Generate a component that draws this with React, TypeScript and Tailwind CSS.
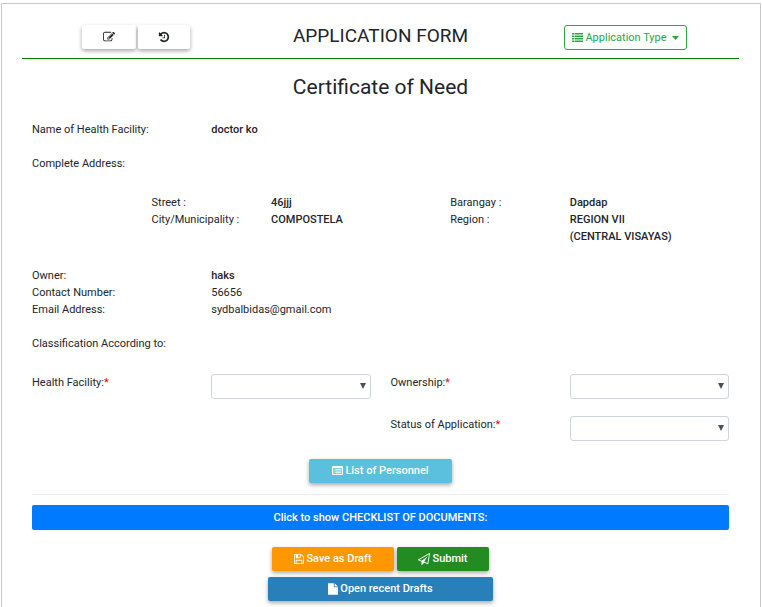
import type { ReactNode } from "react";

const raised =
  "inline-flex h-6 items-center justify-center gap-[2px] rounded-[2px] pb-px text-[11px] font-medium shadow-[0_2px_4px_rgba(0,0,0,0.35)]";

const icons = {
  edit: "M888 1184l116-116-152-152-116 116v56h96v96h56zm440-720q-16-16-33 1l-350 350q-17 17-1 33t33-1l350-350q17-17 1-33zm80 594v190q0 119-84.5 203.5t-203.5 84.5h-832q-119 0-203.5-84.5t-84.5-203.5v-832q0-119 84.5-203.5t203.5-84.5h832q63 0 117 25 15 7 18 23 3 17-9 29l-49 49q-14 14-32 8-23-6-45-6h-832q-66 0-113 47t-47 113v832q0 66 47 113t113 47h832q66 0 113-47t47-113v-126q0-13 9-22l64-64q15-15 35-7t20 29zm-96-738l288 288-672 672h-288v-288zm444 132l-92 92-288-288 92-92q28-28 68-28t68 28l152 152q28 28 28 68t-28 68z",
  history:
    "M1664 896q0 156-61 298t-164 245-245 164-298 61q-172 0-327-72.5t-264-204.5q-7-10-6.5-22.5t8.5-20.5l137-138q10-9 25-9 16 2 23 12 73 95 179 147t225 52q104 0 198.5-40.5t163.5-109.5 109.5-163.5 40.5-198.5-40.5-198.5-109.5-163.5-163.5-109.5-198.5-40.5q-98 0-188 35.5t-160 101.5l137 138q31 30 14 69-17 40-59 40h-448q-26 0-45-19t-19-45v-448q0-42 40-59 39-17 69 14l130 129q107-101 244.5-156.5t284.5-55.5q156 0 298 61t245 164 164 245 61 298zm-640-288v448q0 14-9 23t-23 9h-320q-14 0-23-9t-9-23v-64q0-14 9-23t23-9h224v-352q0-14 9-23t23-9h64q14 0 23 9t9 23z",
  save: "M512 1536h768v-384h-768v384zm896 0h128v-896q0-14-10-38.5t-20-34.5l-281-281q-10-10-34-20t-39-10v416q0 40-28 68t-68 28h-576q-40 0-68-28t-28-68v-416h-128v1280h128v-416q0-40 28-68t68-28h832q40 0 68 28t28 68v416zm-384-928v-320q0-13-9.5-22.5t-22.5-9.5h-192q-13 0-22.5 9.5t-9.5 22.5v320q0 13 9.5 22.5t22.5 9.5h192q13 0 22.5-9.5t9.5-22.5zm640 32v928q0 40-28 68t-68 28h-1344q-40 0-68-28t-28-68v-1344q0-40 28-68t68-28h928q40 0 88 20t76 48l280 280q28 28 48 76t20 88z",
  send: "M1764 11q33 24 27 64l-256 1536q-5 29-32 45-14 8-31 8-11 0-24-5l-527-215-298 327q-18 21-47 21-14 0-23-4-19-7-30-23.5t-11-36.5v-452l-472-193q-37-14-40-55-3-39 32-59l1664-960q35-21 68 2zm-342 1499l221-1323-1434 827 336 137 863-639-478 797z",
  file: "M1152 512v-472q22 14 36 28l408 408q14 14 28 36h-472zm-128 32q0 40 28 68t68 28h544v1056q0 40-28 68t-68 28h-1344q-40 0-68-28t-28-68v-1600q0-40 28-68t68-28h800v544z",
};

function Icon({ name, box, className }: { name: keyof typeof icons; box: string; className: string }) {
  return (
    <svg viewBox={box} className={className} fill="currentColor" aria-hidden="true">
      <path d={icons[name]} />
    </svg>
  );
}

/* Four rows, each a bullet and a bar. */
function ListIcon() {
  return (
    <svg viewBox="0 0 11 9" className="h-[9px] w-[11px]" fill="currentColor" aria-hidden="true">
      <path d="M0 0h2v1.5H0zM2.5 0H11v1.5H2.5zM0 2.5h2V4H0zM2.5 2.5H11V4H2.5zM0 5h2v1.5H0zM2.5 5H11v1.5H2.5zM0 7.5h2V9H0zM2.5 7.5H11V9H2.5z" />
    </svg>
  );
}

/* Framed table with a heavy top bar and three rows. */
function ListAltIcon() {
  return (
    <svg viewBox="0 0 22 18" className="h-[9px] w-[11px]" aria-hidden="true">
      <path
        fill="currentColor"
        fillRule="evenodd"
        d="M2 0h18a2 2 0 0 1 2 2v14a2 2 0 0 1-2 2H2a2 2 0 0 1-2-2V2a2 2 0 0 1 2-2zM2 4v12h18V4z"
      />
      <path fill="currentColor" d="M3 5.5h2v2H3zM6.500 5.500H19v2H6.500zM3 9h2v2H3zM6.500 9H19v2H6.500zM3 12.500h2v2H3zM6.500 12.500H19v2H6.500z" />
    </svg>
  );
}

function Cell({ span, children }: { span: string; children?: ReactNode }) {
  return <div className={`px-[10px] ${span}`}>{children}</div>;
}

function Field({ id, label, className }: { id: string; label: string; className: string }) {
  return (
    <>
      <label htmlFor={id} className={`col-span-3 px-[10px] ${className}`}>
        {label}:<span className="text-[#ff0000]">*</span>
      </label>
      <div className="col-span-3 px-[10px]">
        <div className="relative">
          <select
            id={id}
            className="block h-[25px] w-full appearance-none rounded-[3px] border border-[#ced4da] bg-white px-2"
          >
            <option value=""></option>
          </select>
          <svg
            viewBox="0 0 6 6"
            className="pointer-events-none absolute top-[9px] right-[5px] size-[6px] text-[#495057]"
            aria-hidden="true"
          >
            <path fill="currentColor" d="M0 0h6L3 6z" />
          </svg>
        </div>
      </div>
    </>
  );
}

export default function App() {
  return (
    <div className="flex min-h-screen flex-col bg-white px-px pt-[3px] font-['Roboto','Liberation_Sans',sans-serif] text-[11px] leading-[17px] text-[#212529]">
      <main className="flex-1 border border-b-0 border-[#c8c8c8] pt-5 pr-[21px] pl-5">
        <header className="grid grid-cols-3 gap-x-[18px] border-b border-[#008000] pb-2">
          <div className="flex justify-center gap-[2px] pt-px">
            <button type="button" aria-label="Edit" className={`${raised} w-[54px] bg-white`}>
              <Icon name="edit" box="0 0 1792 1792" className="size-3" />
            </button>
            <button type="button" aria-label="History" className={`${raised} w-[52px] bg-white`}>
              <Icon name="history" box="0 0 1792 1792" className="size-3" />
            </button>
          </div>
          <h1 className="text-center text-[19px] leading-[23px]">APPLICATION FORM</h1>
          <div className="flex justify-center pt-px">
            <button
              type="button"
              className="inline-flex h-[25px] items-center gap-[2px] rounded-[3px] border border-[#28a745] px-[7px] text-[#28a745]"
            >
              <ListIcon />
              Application Type
              <svg viewBox="0 0 7 4" className="ml-[3px] h-1 w-[7px]" fill="currentColor" aria-hidden="true">
                <path d="M0 0h7L3.5 4z" />
              </svg>
            </button>
          </div>
        </header>

        <h2 className="pt-4 text-center text-[21px] leading-6">Certificate of Need</h2>

        <section className="grid grid-cols-12 pt-[22px]">
          <Cell span="col-span-3">Name of Health Facility:</Cell>
          <Cell span="col-span-9">
            <strong className="font-medium">doctor ko</strong>
          </Cell>
        </section>

        <section className="grid grid-cols-12 pt-[17px]">
          <Cell span="col-span-12">Complete Address:</Cell>
        </section>

        <section className="grid grid-cols-12 pt-[22px]">
          <Cell span="col-span-2 col-start-3">Street :</Cell>
          <Cell span="col-span-3">
            <strong className="font-medium">46jjj</strong>
          </Cell>
          <Cell span="col-span-2">Barangay :</Cell>
          <Cell span="col-span-3">
            <strong className="font-medium">Dapdap</strong>
          </Cell>
          <Cell span="col-span-2 col-start-3">City/Municipality :</Cell>
          <Cell span="col-span-3">
            <strong className="font-medium">COMPOSTELA</strong>
          </Cell>
          <Cell span="col-span-2">Region :</Cell>
          <Cell span="col-span-3">
            <strong className="font-medium">
              REGION VII
              <br />
              (CENTRAL VISAYAS)
            </strong>
          </Cell>
        </section>

        <section className="grid grid-cols-12 pt-[22px]">
          <Cell span="col-span-3">Owner:</Cell>
          <Cell span="col-span-9">
            <strong className="font-medium">haks</strong>
          </Cell>
          <Cell span="col-span-3">Contact Number:</Cell>
          <Cell span="col-span-9">56656</Cell>
          <Cell span="col-span-3">Email Address:</Cell>
          <Cell span="col-span-9">sydbalbidas@gmail.com</Cell>
        </section>

        <section className="grid grid-cols-12 pt-[17px]">
          <Cell span="col-span-12">Classification According to:</Cell>
        </section>

        <form className="grid grid-cols-12 gap-y-[17px] pt-[22px]">
          <Field id="facility" label="Health Facility" className="" />
          <Field id="ownership" label="Ownership" className="" />
          <Field id="status" label="Status of Application" className="col-start-7" />
        </form>

        <div className="px-[10px]">
          <div className="flex justify-center pt-[18px]">
            <button type="button" className={`${raised} w-[143px] bg-[#5bc0de] text-white`}>
              <ListAltIcon />
              List of Personnel
            </button>
          </div>

          <hr className="mt-[11px] border-[#eeeeee]" />

          <button
            type="button"
            className="mt-[10px] block h-[25px] w-full rounded-[2px] bg-[#007bff] font-medium text-white"
          >
            Click to show CHECKLIST OF DOCUMENTS:
          </button>

          <div className="flex flex-col items-center gap-[6px] pt-[17px]">
            <div className="flex gap-[3px]">
              <button type="button" className={`${raised} w-[122px] bg-[#ff9800] text-white`}>
                <Icon name="save" box="128 0 1536 1792" className="h-3 w-[10px]" />
                Save as Draft
              </button>
              <button type="button" className={`${raised} w-[92px] bg-[#228b22] text-white`}>
                <Icon name="send" box="0 0 1792 1792" className="size-3" />
                Submit
              </button>
            </div>
            <button type="button" className={`${raised} w-[225px] bg-[#2980b9] text-white`}>
              <Icon name="file" box="128 0 1536 1792" className="h-3 w-[10px]" />
              Open recent Drafts
            </button>
          </div>
        </div>
      </main>
    </div>
  );
}
